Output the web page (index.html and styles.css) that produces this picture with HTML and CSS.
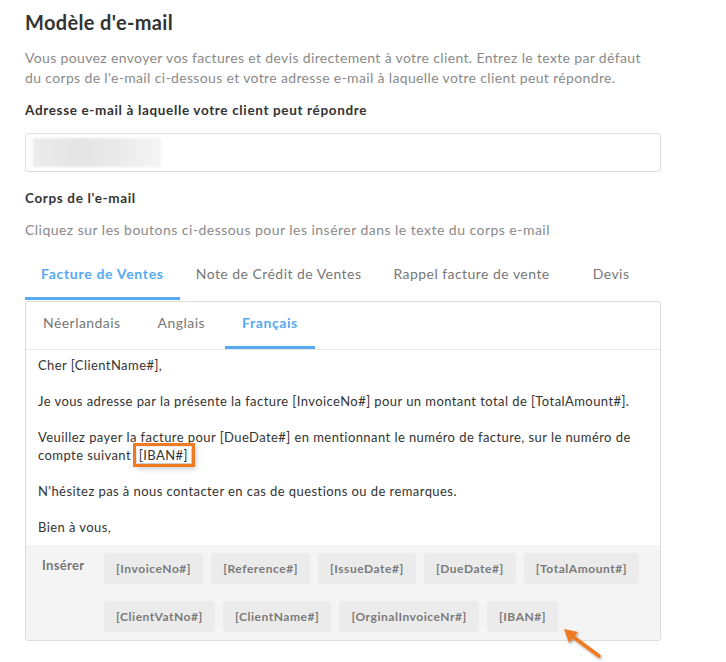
FILE: index.html
```html
<!DOCTYPE html>
<html lang="fr">
<head>
<meta charset="utf-8">
<title>Modèle d'e-mail</title>
<link rel="stylesheet" href="styles.css">
</head>
<body>
<div class="page">
  <h1 class="title">Modèle d'e-mail</h1>
  <p class="intro">Vous pouvez envoyer vos factures et devis directement à votre client. Entrez le texte par défaut<br>du corps de l'e-mail ci-dessous et votre adresse e-mail à laquelle votre client peut répondre.</p>
  <div class="label">Adresse e-mail à laquelle votre client peut répondre</div>
  <div class="input"><span class="blur"></span></div>
  <div class="label label-body">Corps de l'e-mail</div>
  <p class="hint">Cliquez sur les boutons ci-dessous pour les insérer dans le texte du corps e-mail</p>
  <nav class="tabs">
    <span class="tab active">Facture de Ventes</span>
    <span class="tab">Note de Crédit de Ventes</span>
    <span class="tab">Rappel facture de vente</span>
    <span class="tab tab-last">Devis</span>
  </nav>
  <div class="panel">
    <nav class="subtabs">
      <span class="subtab">Néerlandais</span>
      <span class="subtab">Anglais</span>
      <span class="subtab active">Français</span>
    </nav>
    <div class="editor">
      <p>Cher [ClientName#],</p>
      <p>Je vous adresse par la présente la facture [InvoiceNo#] pour un montant total de [TotalAmount#].</p>
      <p>Veuillez payer la facture pour [DueDate#] en mentionnant le numéro de facture, sur le numéro de<br>compte suivant <span class="mark">[IBAN#]</span></p>
      <p>N'hésitez pas à nous contacter en cas de questions ou de remarques.</p>
      <p>Bien à vous,</p>
    </div>
    <div class="insert">
      <div class="insert-label">Insérer</div>
      <div class="chips">
        <div class="chip-row">
          <span class="chip">[InvoiceNo#]</span>
          <span class="chip">[Reference#]</span>
          <span class="chip">[IssueDate#]</span>
          <span class="chip">[DueDate#]</span>
          <span class="chip">[TotalAmount#]</span>
        </div>
        <div class="chip-row">
          <span class="chip">[ClientVatNo#]</span>
          <span class="chip">[ClientName#]</span>
          <span class="chip">[OrginalInvoiceNr#]</span>
          <span class="chip">[IBAN#]</span>
        </div>
      </div>
    </div>
  </div>
  <svg class="arrow" width="50" height="40" viewBox="0 0 50 40" aria-hidden="true">
    <defs>
      <filter id="sh" x="-30%" y="-30%" width="160%" height="160%">
        <feDropShadow dx="1" dy="1.5" stdDeviation="1.2" flood-color="#000" flood-opacity="0.35"/>
      </filter>
    </defs>
    <g filter="url(#sh)">
      <line x1="39" y1="32" x2="12" y2="12" stroke="#f07a22" stroke-width="3.5" stroke-linecap="round"/>
      <polygon points="4,5 18,8 9,19" fill="#f07a22"/>
    </g>
  </svg>
</div>
</body>
</html>
```

FILE: styles.css
```css
* { box-sizing: border-box; }
html, body { margin: 0; padding: 0; background: #fff; }
body {
  font-family: Lato, "Open Sans", "Liberation Sans", sans-serif;
  color: #333;
}
.page {
  position: relative;
  width: 726px;
  height: 662px;
  padding-left: 25px;
  overflow: hidden;
}
.title {
  margin: 10px 0 0;
  font-size: 20px;
  line-height: 24px;
  font-weight: 700;
  letter-spacing: 0.35px;
  color: #333;
}
.intro {
  margin: 14px 0 0;
  font-size: 14px;
  line-height: 20px;
  letter-spacing: 0.35px;
  color: #8a8a8a;
}
.label {
  margin-top: 13px;
  font-size: 13.5px;
  line-height: 18px;
  font-weight: 700;
  letter-spacing: 0.65px;
  color: #333;
}
.input {
  margin-top: 14px;
  width: 636px;
  height: 39px;
  border: 1px solid #dedede;
  border-radius: 3px;
  padding: 4px 7px;
}
.blur {
  display: block;
  width: 128px;
  height: 29px;
  background: linear-gradient(90deg, #ececec 0%, #e4e4e4 35%, #ebebeb 70%, #f5f5f5 100%);
  filter: blur(1px);
}
.label-body { margin-top: 17px; }
.hint {
  margin: 13px 0 0;
  font-size: 14px;
  line-height: 20px;
  letter-spacing: 0.47px;
  color: #8a8a8a;
}
.tabs {
  display: flex;
  margin-top: 12px;
}
.tab {
  padding: 12px 16px 13px;
  font-size: 14px;
  line-height: 20px;
  letter-spacing: 0.46px;
  color: #777;
  border-bottom: 3px solid transparent;
}
.tab.active {
  color: #55aaf3;
  font-weight: 700;
  letter-spacing: 0.7px;
  border-bottom-color: #55aaf3;
}
.tab-last { padding-left: 27px; }
.panel {
  margin-top: 1px;
  width: 636px;
  height: 340px;
  border: 1px solid #dcdcdc;
  border-radius: 3px;
  overflow: hidden;
}
.subtabs {
  display: flex;
  gap: 3px;
  border-bottom: 1px solid #e8e8e8;
}
.subtab {
  padding: 11px 17px 13px;
  font-size: 14px;
  line-height: 20px;
  letter-spacing: 0.45px;
  color: #777;
  border-bottom: 3px solid transparent;
}
.subtab.active {
  color: #55aaf3;
  font-weight: 700;
  letter-spacing: 0.6px;
  border-bottom-color: #55aaf3;
}
.editor {
  padding: 6px 12px 9px;
  font-size: 13px;
  line-height: 18px;
  letter-spacing: 0.43px;
  color: #333;
}
.editor p { margin: 0 0 18px; }
.editor p:last-child { margin-bottom: 0; }
.mark {
  margin-left: 2px;
  padding: 0 3px 0 2px;
  outline: 3px solid #f07a22;
  outline-offset: 1px;
  box-shadow: 2px 3px 5px 3px rgba(0,0,0,0.2);
}
.insert {
  display: flex;
  background: #f4f4f4;
  padding: 8px 0 8px 16px;
  height: 95px;
}
.insert-label {
  width: 62px;
  padding-top: 3px;
  font-size: 13px;
  line-height: 18px;
  font-weight: 700;
  letter-spacing: 0.3px;
  color: #777;
}
.chips {
  display: flex;
  flex-direction: column;
  gap: 17px;
}
.chip-row {
  display: flex;
  gap: 8px;
}
.chip {
  height: 31px;
  line-height: 31px;
  padding: 0 12px;
  background: #ebebeb;
  border-radius: 4px;
  font-size: 12px;
  font-weight: 700;
  letter-spacing: 0.55px;
  color: #7a7a7a;
}
.arrow {
  position: absolute;
  left: 560px;
  top: 624px;
}
```
